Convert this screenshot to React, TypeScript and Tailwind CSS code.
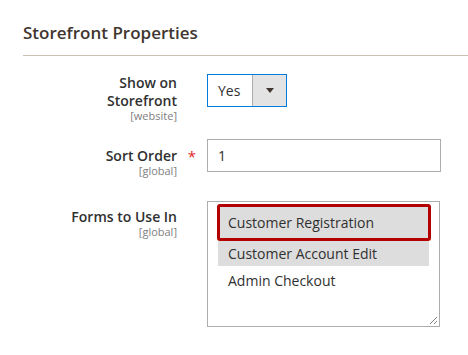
import React from "react";

export default function App() {
  return (
    <div className="w-[468px] h-[355px] bg-white pl-[23px] font-['Open_Sans',sans-serif] text-[#303030] overflow-hidden">
      <div className="h-[56px] border-b border-[#cac3b4] pt-[21px]">
        <h2 className="text-[17px] leading-[23px] font-semibold text-[#41362f]">Storefront Properties</h2>
      </div>

      {/* Row 1 */}
      <div className="flex mt-[18px]">
        <div className="w-[154px] text-right">
          <div className="text-[14px] leading-[18px] font-semibold">Show on<br />Storefront</div>
          <div className="text-[11px] leading-[12px] text-[#808080]">[website]</div>
        </div>
        <div className="w-[30px]" />
        <div className="flex w-[80px] h-[33px] border border-[#007bdb] bg-white">
          <div className="flex-1 flex items-center pl-[10px] text-[14px]">Yes</div>
          <div className="w-[34px] h-full bg-[#e3e3e3] border-l border-[#adadad] flex items-center justify-center">
            <svg width="8" height="5" viewBox="0 0 8 5">
              <path d="M0 0 L8 0 L4 5 Z" fill="#41362f" />
            </svg>
          </div>
        </div>
      </div>

      {/* Row 2 */}
      <div className="flex mt-[17px]">
        <div className="w-[154px] text-right pt-[8px]">
          <div className="text-[14px] leading-[18px] font-semibold">Sort Order</div>
          <div className="text-[11px] leading-[12px] text-[#808080]">[global]</div>
        </div>
        <div className="w-[30px] pt-[8px] text-center text-[15px] leading-[18px] text-[#e22626]">*</div>
        <div className="w-[234px] h-[33px] border border-[#adadad] flex items-center pl-[10px] text-[14px]">1</div>
      </div>

      {/* Row 3 */}
      <div className="flex mt-[24px]">
        <div className="w-[154px] text-right pt-[7px]">
          <div className="text-[14px] leading-[18px] font-semibold">Forms to Use In</div>
          <div className="text-[11px] leading-[12px] text-[#808080]">[global]</div>
        </div>
        <div className="w-[30px]" />
        <div className="relative w-[233px] h-[126px] border border-[#adadad] pl-[9px] pt-[2px] text-[14px]">
          <div className="w-[214px] h-[37px] border-[3px] border-[#b30000] rounded-[3px] bg-[#dddddd] flex items-center pl-[8px]">
            Customer Registration
          </div>
          <div className="ml-[1px] w-[211px] h-[25px] bg-[#dddddd] flex items-center pl-[10px]">
            Customer Account Edit
          </div>
          <div className="ml-[1px] w-[211px] h-[29px] flex items-center pl-[10px]">
            Admin Checkout
          </div>
          <svg className="absolute right-[1px] bottom-[1px]" width="9" height="9" viewBox="0 0 9 9">
            <path d="M8 1 L1 8 M8 5 L5 8" stroke="#888" strokeWidth="1" />
          </svg>
        </div>
      </div>
    </div>
  );
}
